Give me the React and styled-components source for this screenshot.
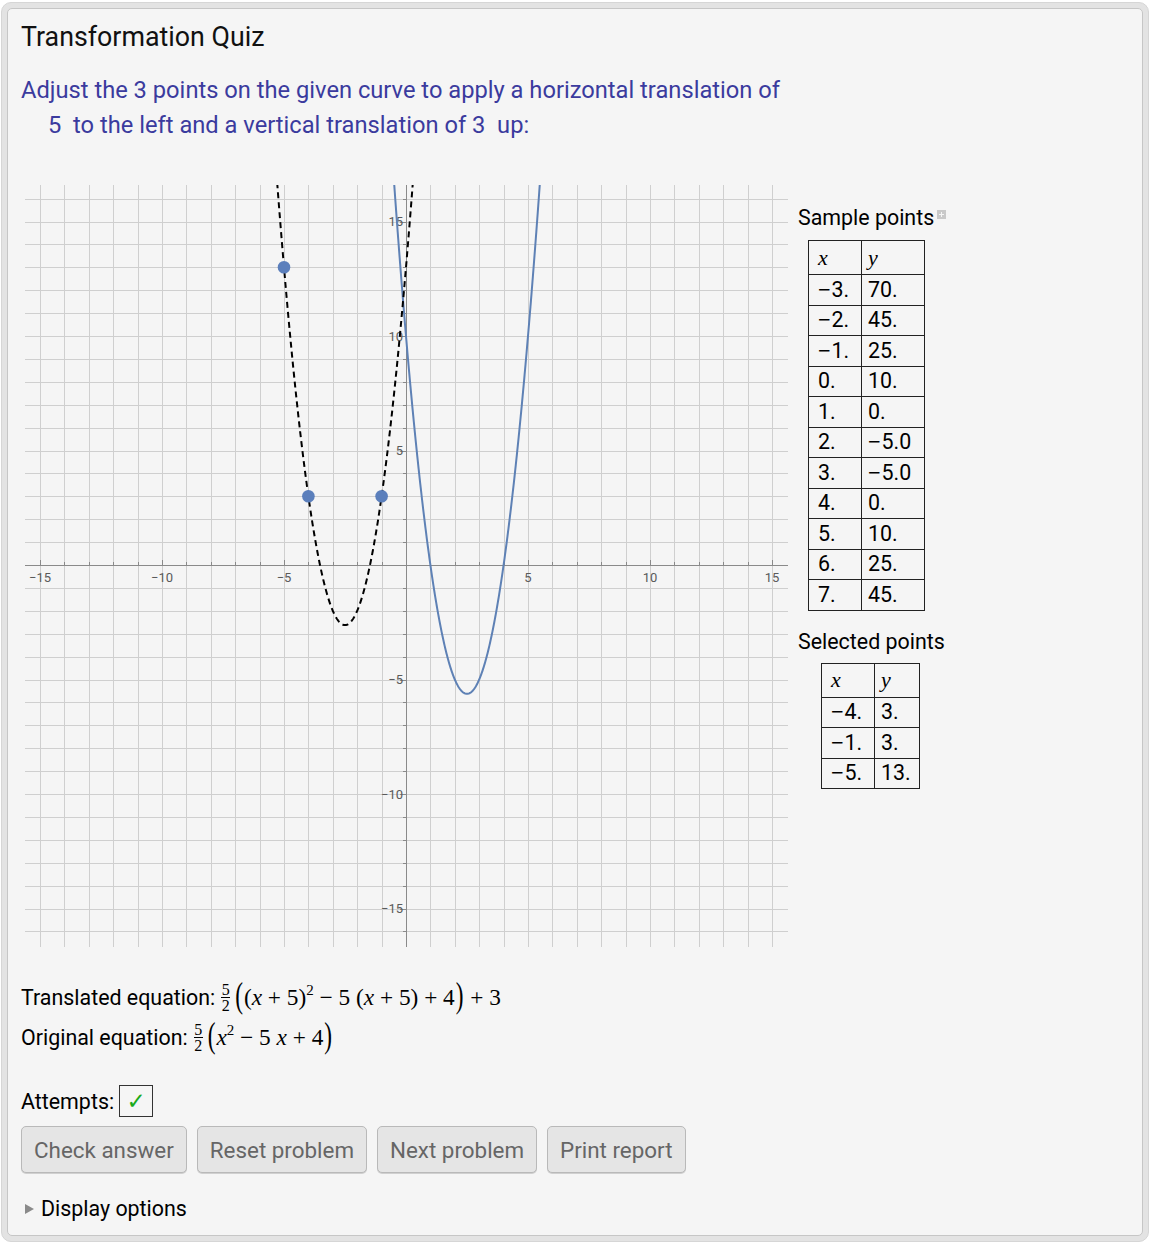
import React from "react";
import styled, { createGlobalStyle } from "styled-components";

const Global = createGlobalStyle`
  html, body { margin: 0; padding: 0; background: #ffffff; }
  body { font-family: Roboto, "Noto Sans", sans-serif; color: #000; }
`;

const Frame = styled.div`
  margin: 2px 1px 2px 1px;
  background: #e3e3e3;
  border: 1px solid #d6d6d6;
  border-radius: 10px;
  padding: 5px;
`;

const Panel = styled.div`
  background: #f5f5f5;
  border: 1px solid #c6c6c6;
  border-radius: 5px;
  padding: 13px 13px 14px 13px;
  box-sizing: border-box;
  height: 1228px;
`;

const Title = styled.div`
  font-size: 26.8px;
  line-height: 30px;
  color: #111;
`;

const Prompt = styled.div`
  margin-top: 21px;
  color: #3b3b9e;
  font-size: 23.7px;
  line-height: 35px;
`;

const PromptLine = styled.div`
  padding-left: ${(p) => (p.$indent ? "27px" : "0")};
  white-space: pre;
`;

const Row = styled.div`
  display: flex;
  margin-top: 42px;
  align-items: flex-start;
`;

const Side = styled.div`
  display: flex;
  flex-direction: column;
  align-items: flex-start;
  margin-left: 7px;
  padding-top: 21px;
`;

const Caption = styled.div`
  position: relative;
  font-size: 21.4px;
  line-height: 24px;
  margin-top: ${(p) => p.$top || 0}px;
`;

const PlusBadge = styled.span`
  position: absolute;
  right: -12px;
  top: 4px;
  width: 9px;
  height: 9px;
  background: #c9c9c9;
  &::before, &::after {
    content: "";
    position: absolute;
    background: #f5f5f5;
  }
  &::before { left: 4px; top: 2px; width: 1px; height: 5px; }
  &::after { left: 2px; top: 4px; width: 5px; height: 1px; }
`;

const Table = styled.table`
  border-collapse: collapse;
  margin-top: ${(p) => p.$top}px;
  margin-left: ${(p) => p.$indent}px;
  font-size: 21.4px;
`;

const Cell = styled.td`
  border: 1px solid #222;
  padding: 0 0 0 ${(p) => p.$pad}px;
  width: ${(p) => p.$w}px;
  box-sizing: border-box;
  height: ${(p) => (p.$head ? 34 : 30.5)}px;
  line-height: 20px;
  vertical-align: middle;
  white-space: pre;
`;

const Minus = styled.span`
  font-family: "Liberation Sans", Arial, sans-serif;
  margin-right: 1px;
`;

const HeadVar = styled.span`
  font-family: "Liberation Serif", "Times New Roman", serif;
  font-style: italic;
  font-size: 22px;
`;

const Equations = styled.div`
  margin-top: 27px;
  display: flex;
  flex-direction: column;
`;

const EqLine = styled.div`
  display: flex;
  align-items: center;
  height: 40px;
  font-size: 21.4px;
`;

const EqLabel = styled.span`
  white-space: pre;
  margin-right: 6px;
`;

const MathExpr = styled.span`
  display: inline-block;
  font-family: "Liberation Serif", "Times New Roman", serif;
  font-size: 23.3px;
  line-height: 40px;
  white-space: pre;
`;

const Frac = styled.span`
  display: inline-flex;
  flex-direction: column;
  align-items: center;
  vertical-align: middle;
  font-size: 16px;
  line-height: 13.5px;
  margin: 0 4px 0 0;
  position: relative;
  top: -2px;
`;

const FracBar = styled.span`
  width: 9px;
  height: 1px;
  background: #000;
  margin: 1px 0;
`;

const Big = styled.span`
  display: inline-block;
  transform: scaleY(1.5);
  transform-origin: 50% 62%;
  margin: 0 1px;
`;

const Var = styled.i``;

const Sup = styled.sup`
  font-size: 15px;
  vertical-align: 10px;
  line-height: 0;
`;

const AttemptsRow = styled.div`
  margin-top: 28px;
  display: flex;
  align-items: center;
  font-size: 21.4px;
  gap: 5px;
`;

const CheckBox = styled.span`
  width: 32px;
  height: 30px;
  border: 1px solid #333;
  display: inline-flex;
  align-items: center;
  justify-content: center;
  color: #1aaa1a;
  font-family: "DejaVu Sans", sans-serif;
  font-size: 23px;
`;

const Buttons = styled.div`
  display: flex;
  gap: 10px;
  margin-top: 9px;
`;

const Button = styled.button`
  font-family: Roboto, "Noto Sans", sans-serif;
  font-size: 22.4px;
  color: #666;
  background: #e5e5e5;
  border: 1px solid #b9b9b9;
  border-radius: 5px;
  height: 47px;
  padding: 0 12px;
  box-shadow: 0 1px 0 #d0d0d0;
`;

const Disclosure = styled.div`
  margin-top: 24px;
  display: flex;
  align-items: center;
  font-size: 21.4px;
  line-height: 24px;
  gap: 7px;
  padding-left: 4px;
`;

const Tri = styled.span`
  width: 0;
  height: 0;
  border-top: 5px solid transparent;
  border-bottom: 5px solid transparent;
  border-left: 9px solid #8a8a8a;
`;

/* ---------- graph ---------- */
const W = 770;
const H = 765;
const OX = 385;
const OY = 380;
const SX = 24.4;
const SY = 22.9;
const PL = 4, PR = 767, PT = 0, PB = 762;
const sx = (x) => OX + x * SX;
const sy = (y) => OY - y * SY;
const f = (x) => 2.5 * (x * x - 5 * x + 4);
const g = (x) => f(x + 5) + 3;
const px = (v) => Math.round(v) + 0.5;

function pathOf(fn) {
  let d = "";
  for (let x = -16; x <= 16.001; x += 0.02) {
    const y = fn(x);
    if (y > 40) { continue; }
    d += (d ? "L" : "M") + sx(x).toFixed(2) + " " + sy(y).toFixed(2);
  }
  return d;
}

const GraphSvg = styled.svg`
  display: block;
  flex: none;
  font-family: Roboto, "Noto Sans", sans-serif;
`;

function Graph() {
  const vx = [];
  for (let i = -15; i <= 15; i++) vx.push(i);
  const hy = [];
  for (let j = -16; j <= 16; j++) hy.push(j);
  const xLabels = [-15, -10, -5, 5, 10, 15];
  const yLabels = [15, 10, 5, -5, -10, -15];
  const pts = [[-4, 3], [-1, 3], [-5, 13]];
  return (
    <GraphSvg width={W} height={H} viewBox={`0 0 ${W} ${H}`}>
      <defs>
        <clipPath id="plotclip">
          <rect x={PL} y={PT} width={PR - PL} height={PB - PT} />
        </clipPath>
      </defs>
      <g stroke="#cfcfcf" strokeWidth="1">
        {vx.map((i) => (
          <line key={"v" + i} x1={px(sx(i))} x2={px(sx(i))} y1={PT} y2={PB} />
        ))}
        {hy.map((j) => (
          <line key={"h" + j} x1={PL} x2={PR} y1={px(sy(j))} y2={px(sy(j))} />
        ))}
      </g>
      <g stroke="#8a8a8a" strokeWidth="1">
        <line x1={PL} x2={PR} y1={OY + 0.5} y2={OY + 0.5} />
        <line x1={OX + 0.5} x2={OX + 0.5} y1={PT} y2={PB} />
        {vx.map((i) => (
          <line key={"tx" + i} x1={px(sx(i))} x2={px(sx(i))} y1={OY} y2={OY - (i % 5 === 0 ? 5 : 3)} />
        ))}
        {hy.map((j) => (
          <line key={"ty" + j} y1={px(sy(j))} y2={px(sy(j))} x1={OX} x2={OX - (j % 5 === 0 ? 6 : 3)} />
        ))}
      </g>
      <g fill="#5a5a5a" fontSize="13">
        {xLabels.map((v) => (
          <text key={"xl" + v} x={sx(v)} y={OY + 17} textAnchor="middle">
            {v < 0 ? "\u2212" + -v : v}
          </text>
        ))}
        {yLabels.map((v) => (
          <text key={"yl" + v} x={OX - 3} y={sy(v) + 4.5} textAnchor="end">
            {v < 0 ? "\u2212" + -v : v}
          </text>
        ))}
      </g>
      <g clipPath="url(#plotclip)" fill="none" strokeLinejoin="round">
        <path d={pathOf(f)} stroke="#5e81b5" strokeWidth="2" />
        <path d={pathOf(g)} stroke="#000" strokeWidth="2" strokeDasharray="6 4" />
      </g>
      {pts.map(([x, y]) => (
        <circle key={x + "," + y} cx={sx(x)} cy={sy(y)} r="6.3" fill="#5b7fbc" />
      ))}
    </GraphSvg>
  );
}

const num = (s) =>
  s.startsWith("-") ? (
    <>
      <Minus>{"\u2212"}</Minus>
      {s.slice(1)}
    </>
  ) : (
    s
  );

const sample = [
  ["-3.", "70."], ["-2.", "45."], ["-1.", "25."], ["0.", "10."],
  ["1.", "0."], ["2.", "-5.0"], ["3.", "-5.0"], ["4.", "0."],
  ["5.", "10."], ["6.", "25."], ["7.", "45."],
];
const selected = [["-4.", "3."], ["-1.", "3."], ["-5.", "13."]];

function DataTable({ rows, w1, w2, top, indent }) {
  return (
    <Table $top={top} $indent={indent}>
      <tbody>
        <tr>
          <Cell $head $w={w1} $pad={9}><HeadVar>x</HeadVar></Cell>
          <Cell $head $w={w2} $pad={6}><HeadVar>y</HeadVar></Cell>
        </tr>
        {rows.map((r, i) => (
          <tr key={i}>
            <Cell $w={w1} $pad={9}>{num(r[0])}</Cell>
            <Cell $w={w2} $pad={6}>{num(r[1])}</Cell>
          </tr>
        ))}
      </tbody>
    </Table>
  );
}

export default function App() {
  return (
    <>
      <Global />
      <Frame>
        <Panel>
          <Title>Transformation Quiz</Title>
          <Prompt>
            <PromptLine>Adjust the 3 points on the given curve to apply a horizontal translation of</PromptLine>
            <PromptLine $indent>5  to the left and a vertical translation of 3  up:</PromptLine>
          </Prompt>
          <Row>
            <Graph />
            <Side>
              <Caption>Sample points<PlusBadge /></Caption>
              <DataTable rows={sample} w1={53} w2={63} top={10} indent={10} />
              <Caption $top={19}>Selected points</Caption>
              <DataTable rows={selected} w1={53} w2={45} top={9} indent={23} />
            </Side>
          </Row>
          <Equations>
            <EqLine>
              <EqLabel>Translated equation:</EqLabel>
              <MathExpr>
                <Frac><span>5</span><FracBar /><span>2</span></Frac>
                <Big>(</Big>(<Var>x</Var> + 5)<Sup>2</Sup> − 5 (<Var>x</Var> + 5) + 4<Big>)</Big> + 3
              </MathExpr>
            </EqLine>
            <EqLine>
              <EqLabel>Original equation:</EqLabel>
              <MathExpr>
                <Frac><span>5</span><FracBar /><span>2</span></Frac>
                <Big>(</Big><Var>x</Var><Sup>2</Sup> − 5 <Var>x</Var> + 4<Big>)</Big>
              </MathExpr>
            </EqLine>
          </Equations>
          <AttemptsRow>
            Attempts:<CheckBox>✓</CheckBox>
          </AttemptsRow>
          <Buttons>
            <Button>Check answer</Button>
            <Button>Reset problem</Button>
            <Button>Next problem</Button>
            <Button>Print report</Button>
          </Buttons>
          <Disclosure>
            <Tri />
            Display options
          </Disclosure>
        </Panel>
      </Frame>
    </>
  );
}
